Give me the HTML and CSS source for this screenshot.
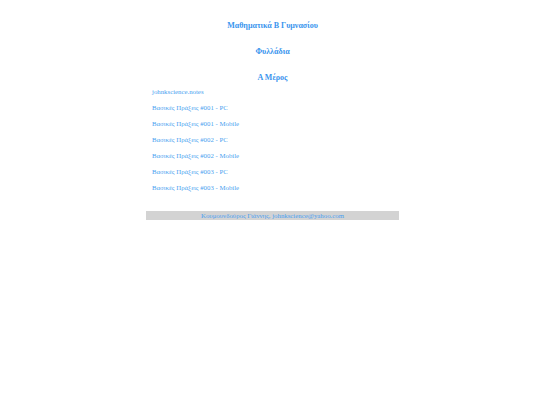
FILE: index.html
```html
<!DOCTYPE html>
<html lang="el">
<head>
<meta charset="utf-8">
<title>Μαθηματικά Β Γυμνασίου</title>
<link rel="stylesheet" href="styles.css">
</head>
<body>
<div class="page">
  <h1 class="title">Μαθηματικά Β Γυμνασίου</h1>
  <h2 class="heading">Φυλλάδια</h2>
  <h2 class="heading">Α Μέρος</h2>
  <ul class="links">
    <li><a href="#">johnkscience.notes</a></li>
    <li><a href="#">Βασικές Πράξεις #001 - PC</a></li>
    <li><a href="#">Βασικές Πράξεις #001 - Mobile</a></li>
    <li><a href="#">Βασικές Πράξεις #002 - PC</a></li>
    <li><a href="#">Βασικές Πράξεις #002 - Mobile</a></li>
    <li><a href="#">Βασικές Πράξεις #003 - PC</a></li>
    <li><a href="#">Βασικές Πράξεις #003 - Mobile</a></li>
  </ul>
  <div class="footer">Κουμουνδούρος Γιάννης, johnkscience@yahoo.com</div>
</div>
</body>
</html>
```
FILE: styles.css
```css
html, body {
  margin: 0;
  padding: 0;
  background: #ffffff;
}
body {
  font-family: "Liberation Serif", "Times New Roman", serif;
  color: #3a95ee;
}
.page {
  width: 253px;
  margin-left: 146px;
  padding-top: 20px;
  display: flex;
  flex-direction: column;
}
.title, .heading {
  margin: 0;
  text-align: center;
  font-weight: bold;
  font-size: 8px;
  line-height: 12px;
  color: #3a95ee;
}
.heading {
  margin-top: 14px;
}
.links {
  list-style: none;
  margin: 3px 0 0 0;
  padding: 0 0 0 6px;
  display: flex;
  flex-direction: column;
  gap: 6px;
}
.links li {
  font-size: 6.8px;
  line-height: 10px;
}
.links a {
  color: #4a9ff0;
  text-decoration: none;
}
.footer {
  margin-top: 18px;
  background: #d3d3d3;
  text-align: center;
  font-size: 6.8px;
  line-height: 9px;
  color: #4a9ff0;
}
```
